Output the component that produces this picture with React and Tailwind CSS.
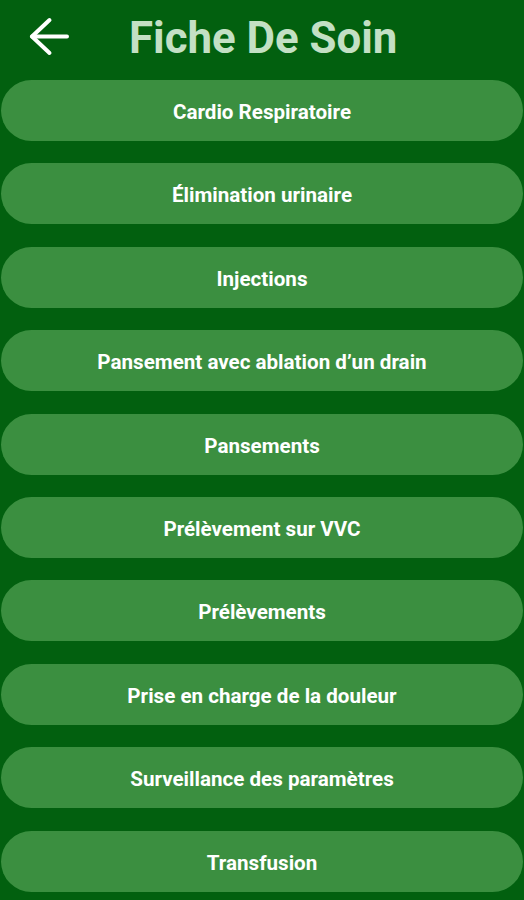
const items = [
  'Cardio Respiratoire',
  'Élimination urinaire',
  'Injections',
  'Pansement avec ablation d’un drain',
  'Pansements',
  'Prélèvement sur VVC',
  'Prélèvements',
  'Prise en charge de la douleur',
  'Surveillance des paramètres',
  'Transfusion',
];

export default function App() {
  return (
    <div className="min-h-screen w-full bg-[#02600f] font-['Roboto',sans-serif] overflow-hidden">
      {/* Header */}
      <div className="h-[74px] flex items-center">
        <button className="ml-[29px] w-[40px] h-[40px] text-white">
          <svg width="40" height="40" viewBox="0 0 40 40" fill="none" stroke="currentColor" strokeWidth="4" strokeLinecap="round" strokeLinejoin="round">
            <path d="M38 19.5H3" />
            <path d="M20.5 3L3 19.5L20.5 36" />
          </svg>
        </button>
        <h1 className="ml-[60px] mt-[3px] text-[43.8px] font-bold text-[#c3e0c4] leading-none">
          Fiche De Soin
        </h1>
      </div>

      {/* List */}
      <div className="mt-[6px] flex flex-col gap-[22.4px] px-px">
        {items.map((item) => (
          <button
            key={item}
            className="h-[61px] w-full rounded-full bg-[#3b8f40] text-white font-bold text-[20.6px] flex items-center justify-center pt-[4px]"
          >
            {item}
          </button>
        ))}
      </div>
    </div>
  );
}
